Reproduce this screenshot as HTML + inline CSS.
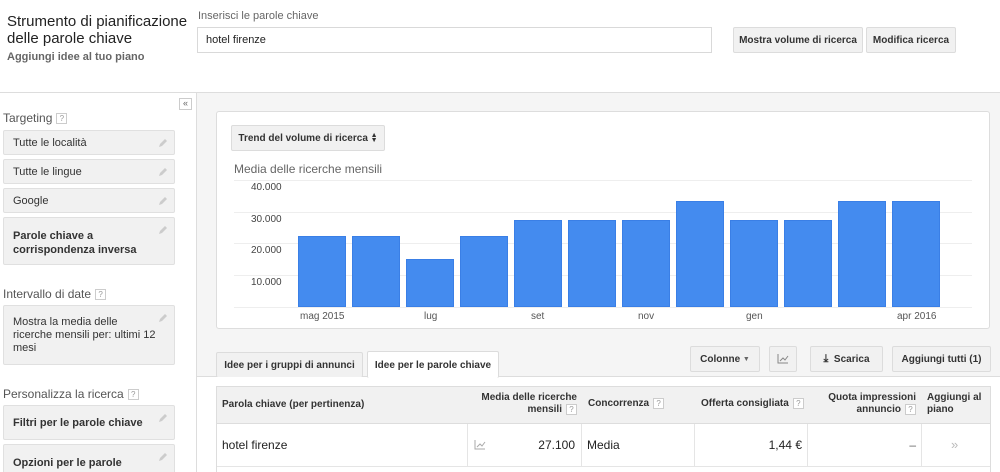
<!DOCTYPE html>
<html><head><meta charset="utf-8"><style>
*{box-sizing:border-box;margin:0;padding:0}
html,body{width:1000px;height:472px;overflow:hidden}
body{font-family:"Liberation Sans",Arial,sans-serif;color:#222;background:#fff;position:relative;font-size:12px}
.a{position:absolute;white-space:nowrap}
.q{display:inline-block;width:11px;height:11px;border:1px solid #ccc;font-size:8px;line-height:9px;text-align:center;color:#999;vertical-align:middle;margin-left:4px;background:#fff;font-weight:normal}
.btn{position:absolute;white-space:nowrap;background:#f1f1f1;border:1px solid #dcdcdc;border-radius:2px;font-weight:bold;font-size:10px;color:#333;display:flex;align-items:center;justify-content:center}
.sb{position:absolute;left:3px;width:172px;background:#f1f1f1;border:1px solid #e0e0e0;border-radius:2px;font-size:11px;color:#333;padding-left:9px;white-space:nowrap}
.pen{position:absolute;right:6px;top:7px;width:10px;height:10px}
.hd{font-size:12px;color:#555}
.bar{position:absolute;background:#448bef;border:1px solid #3a7fe6;width:48px;bottom:0}
.gl{position:absolute;left:0;right:0;height:1px;background:#eee}
.yl{position:absolute;left:17px;font-size:10px;color:#444}
.th{position:absolute;white-space:nowrap;font-weight:bold;font-size:10px;color:#333}
.xl{position:absolute;top:311px;font-size:10px;color:#555}
</style></head><body>
<div class="a" style="left:7px;top:13px;font-size:15px;line-height:17px;color:#222">Strumento di pianificazione<br>delle parole chiave</div>
<div class="a" style="left:7px;top:51px;font-size:11px;font-weight:bold;color:#666">Aggiungi idee al tuo piano</div>
<div class="a" style="left:198px;top:10px;font-size:11px;color:#666">Inserisci le parole chiave</div>
<div class="a" style="left:197px;top:27px;width:515px;height:26px;border:1px solid #d9d9d9;padding:6px 8px;font-size:11px">hotel firenze</div>
<div class="btn" style="left:733px;top:27px;width:130px;height:26px">Mostra volume di ricerca</div>
<div class="btn" style="left:866px;top:27px;width:90px;height:26px">Modifica ricerca</div>
<div class="a" style="left:0;top:92px;width:1000px;height:1px;background:#ddd"></div>
<div class="a" style="left:197px;top:93px;width:803px;height:379px;background:#f5f5f5"></div>
<div class="a" style="left:196px;top:93px;width:1px;height:379px;background:#ddd"></div>
<div class="a" style="left:179px;top:98px;width:13px;height:12px;border:1px solid #ccc;font-size:9px;line-height:9px;text-align:center;color:#666;background:#fff">«</div>

<div class="a hd" style="left:3px;top:111px">Targeting<span class="q">?</span></div>
<div class="sb" style="top:130px;height:25px;line-height:24px">Tutte le località<svg class="pen" viewBox="0 0 10 10"><path d="M1 9 L2 6 L7 1 L9 3 L4 8 Z" fill="#ccc"/></svg></div>
<div class="sb" style="top:159px;height:25px;line-height:24px">Tutte le lingue<svg class="pen" viewBox="0 0 10 10"><path d="M1 9 L2 6 L7 1 L9 3 L4 8 Z" fill="#ccc"/></svg></div>
<div class="sb" style="top:188px;height:25px;line-height:24px">Google<svg class="pen" viewBox="0 0 10 10"><path d="M1 9 L2 6 L7 1 L9 3 L4 8 Z" fill="#ccc"/></svg></div>
<div class="sb" style="top:217px;height:48px;padding-top:11px;font-weight:bold;line-height:14px">Parole chiave a<br>corrispondenza inversa<svg class="pen" viewBox="0 0 10 10"><path d="M1 9 L2 6 L7 1 L9 3 L4 8 Z" fill="#ccc"/></svg></div>
<div class="a hd" style="left:3px;top:287px">Intervallo di date<span class="q">?</span></div>
<div class="sb" style="top:305px;height:60px;padding-top:10px;line-height:13px">Mostra la media delle<br>ricerche mensili per: ultimi 12<br>mesi<svg class="pen" viewBox="0 0 10 10"><path d="M1 9 L2 6 L7 1 L9 3 L4 8 Z" fill="#ccc"/></svg></div>
<div class="a hd" style="left:3px;top:387px">Personalizza la ricerca<span class="q">?</span></div>
<div class="sb" style="top:405px;height:35px;line-height:34px;font-weight:bold">Filtri per le parole chiave<svg class="pen" viewBox="0 0 10 10"><path d="M1 9 L2 6 L7 1 L9 3 L4 8 Z" fill="#ccc"/></svg></div>
<div class="sb" style="top:444px;height:40px;padding-top:11px;font-weight:bold;line-height:14px">Opzioni per le parole<br>chiave<svg class="pen" viewBox="0 0 10 10"><path d="M1 9 L2 6 L7 1 L9 3 L4 8 Z" fill="#ccc"/></svg></div>

<div class="a" style="left:216px;top:111px;width:774px;height:218px;background:#fff;border:1px solid #ddd;border-radius:3px"></div>
<div class="btn" style="left:231px;top:125px;width:154px;height:26px">Trend del volume di ricerca&nbsp;<span style="font-size:7px;line-height:5px;display:inline-block">▲<br>▼</span></div>
<div class="a" style="left:234px;top:162px;font-size:12px;color:#666">Media delle ricerche mensili</div>
<div class="a" style="left:234px;top:180px;width:738px;height:128px">
<div class="gl" style="top:0"></div><div class="gl" style="top:32px"></div><div class="gl" style="top:63px"></div><div class="gl" style="top:95px"></div><div class="gl" style="top:127px"></div>
<div class="yl" style="top:2px">40.000</div><div class="yl" style="top:34px">30.000</div><div class="yl" style="top:65px">20.000</div><div class="yl" style="top:97px">10.000</div>
<div class="a" style="left:0;top:0;width:738px;height:127px">
<div class="bar" style="left:64px;height:71px"></div>
<div class="bar" style="left:118px;height:71px"></div>
<div class="bar" style="left:172px;height:48px"></div>
<div class="bar" style="left:226px;height:71px"></div>
<div class="bar" style="left:280px;height:87px"></div>
<div class="bar" style="left:334px;height:87px"></div>
<div class="bar" style="left:388px;height:87px"></div>
<div class="bar" style="left:442px;height:106px"></div>
<div class="bar" style="left:496px;height:87px"></div>
<div class="bar" style="left:550px;height:87px"></div>
<div class="bar" style="left:604px;height:106px"></div>
<div class="bar" style="left:658px;height:106px"></div>
</div></div>
<div class="xl" style="left:300px">mag 2015</div>
<div class="xl" style="left:424px">lug</div>
<div class="xl" style="left:531px">set</div>
<div class="xl" style="left:638px">nov</div>
<div class="xl" style="left:746px">gen</div>
<div class="xl" style="left:897px">apr 2016</div>

<div class="a" style="left:197px;top:376px;width:803px;height:1px;background:#ddd"></div>
<div class="a" style="left:197px;top:377px;width:803px;height:95px;background:#fff"></div>
<div class="btn" style="left:216px;top:352px;width:147px;height:25px;border-bottom:none;background:#f1f1f1">Idee per i gruppi di annunci</div>
<div class="btn" style="left:367px;top:351px;width:132px;height:27px;border-bottom:none;background:#fff">Idee per le parole chiave</div>
<div class="btn" style="left:690px;top:346px;width:70px;height:26px">Colonne&nbsp;<span style="font-size:7px;color:#666">▼</span></div>
<div class="btn" style="left:769px;top:346px;width:28px;height:26px"><svg width="12" height="10" viewBox="0 0 12 10"><path d="M1 0V9H11M3 7L6 4L8 6L11 2" stroke="#888" fill="none"/></svg></div>
<div class="btn" style="left:810px;top:346px;width:73px;height:26px"><span style="font-size:11px">⤓</span>&nbsp;&nbsp;Scarica</div>
<div class="btn" style="left:892px;top:346px;width:99px;height:26px">Aggiungi tutti (1)</div>

<div class="a" style="left:216px;top:386px;width:775px;height:86px;border:1px solid #ddd;border-bottom:none"></div>
<div class="a" style="left:217px;top:387px;width:773px;height:37px;background:#f1f1f1;border-bottom:1px solid #ddd"></div>
<div class="th" style="left:222px;top:399px">Parola chiave (per pertinenza)</div>
<div class="th" style="left:470px;top:392px;width:107px;text-align:right;line-height:12px">Media delle ricerche<br>mensili<span class="q">?</span></div>
<div class="th" style="left:588px;top:398px">Concorrenza<span class="q">?</span></div>
<div class="th" style="left:701px;top:398px">Offerta consigliata<span class="q">?</span></div>
<div class="th" style="left:812px;top:392px;width:104px;text-align:right;line-height:12px">Quota impressioni<br>annuncio<span class="q">?</span></div>
<div class="th" style="left:927px;top:392px;line-height:12px">Aggiungi al<br>piano</div>
<div class="a" style="left:217px;top:466px;width:773px;height:1px;background:#e5e5e5"></div>
<div class="a" style="left:467px;top:424px;width:1px;height:42px;background:#e5e5e5"></div>
<div class="a" style="left:581px;top:424px;width:1px;height:42px;background:#e5e5e5"></div>
<div class="a" style="left:694px;top:424px;width:1px;height:42px;background:#e5e5e5"></div>
<div class="a" style="left:807px;top:424px;width:1px;height:42px;background:#e5e5e5"></div>
<div class="a" style="left:921px;top:424px;width:1px;height:42px;background:#e5e5e5"></div>
<div class="a" style="left:222px;top:438px;font-size:12px">hotel firenze</div>
<svg class="a" style="left:474px;top:440px" width="12" height="10" viewBox="0 0 12 10"><path d="M1 0V9H11M3 7L6 4L8 6L11 2" stroke="#aaa" fill="none"/></svg>
<div class="a" style="left:500px;top:438px;width:75px;text-align:right;font-size:12px">27.100</div>
<div class="a" style="left:587px;top:438px;font-size:12px">Media</div>
<div class="a" style="left:700px;top:438px;width:102px;text-align:right;font-size:12px">1,44 €</div>
<div class="a" style="left:820px;top:438px;width:96px;text-align:right;font-size:12px;color:#666">–</div>
<div class="a" style="left:951px;top:437px;font-size:13px;color:#bbb">»</div>
</body></html>
